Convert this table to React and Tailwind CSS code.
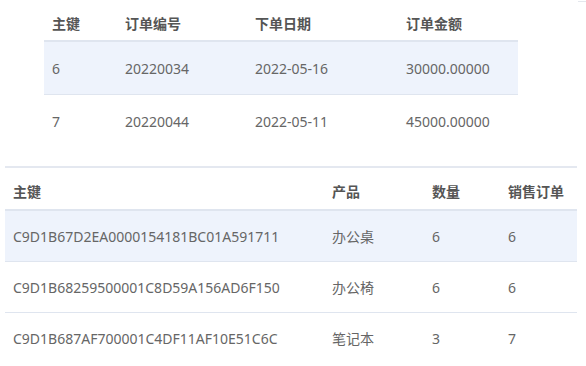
import React from "react";

const orders = [
  { id: "6", no: "20220034", date: "2022-05-16", amount: "30000.00000" },
  { id: "7", no: "20220044", date: "2022-05-11", amount: "45000.00000" },
];

const items = [
  { id: "C9D1B67D2EA0000154181BC01A591711", product: "办公桌", qty: "6", order: "6" },
  { id: "C9D1B68259500001C8D59A156AD6F150", product: "办公椅", qty: "6", order: "6" },
  { id: "C9D1B687AF700001C4DF11AF10E51C6C", product: "笔记本", qty: "3", order: "7" },
];

const font = { fontFamily: '"Noto Sans", "Noto Sans CJK SC", sans-serif' };

export default function App() {
  return (
    <div className="relative w-[586px] h-[366px] bg-white overflow-hidden text-[14px]" style={font}>
      <div className="absolute right-0 top-[1px] w-[8px] h-px bg-[#e4e7ed]"></div>

      {/* Orders */}
      <div className="ml-[44px] w-[474px]">
        <div className="flex h-[40px] pt-[6px] items-center font-bold text-[#555]">
          <div className="w-[73px] pl-[8px]">主键</div>
          <div className="w-[130px] pl-[8px]">订单编号</div>
          <div className="w-[151px] pl-[8px]">下单日期</div>
          <div className="w-[120px] pl-[8px]">订单金额</div>
        </div>
        <div className="border-t-2 border-[#dfe5ef]">
          {orders.map((o, i) => (
            <div
              key={o.id}
              className={
                "flex items-center h-[53px] text-[#666] " +
                (i === 0 ? "bg-[#eef3fc] border-b border-[#dfe5ef]" : "")
              }
            >
              <div className="w-[73px] pl-[8px]">{o.id}</div>
              <div className="w-[130px] pl-[8px]">{o.no}</div>
              <div className="w-[151px] pl-[8px]">{o.date}</div>
              <div className="w-[120px] pl-[8px]">{o.amount}</div>
            </div>
          ))}
        </div>
      </div>

      {/* Order items */}
      <div className="mt-[18px] ml-[5px] w-[572px] border-t-2 border-[#e4e8f0]">
        <div className="flex h-[41px] pt-[6px] items-center font-bold text-[#555]">
          <div className="w-[319px] pl-[8px]">主键</div>
          <div className="w-[100px] pl-[8px]">产品</div>
          <div className="w-[76px] pl-[8px]">数量</div>
          <div className="w-[77px] pl-[8px]">销售订单</div>
        </div>
        <div className="border-t-2 border-[#dfe5ef]">
          {items.map((r, i) => (
            <div
              key={r.id}
              className={
                "flex items-center h-[51px] text-[#666] " +
                (i === 0 ? "bg-[#eef3fc] " : "") +
                (i < items.length - 1 ? "border-b border-[#dfe5ef]" : "")
              }
            >
              <div className="w-[319px] pl-[8px]">{r.id}</div>
              <div className="w-[100px] pl-[8px]">{r.product}</div>
              <div className="w-[76px] pl-[8px]">{r.qty}</div>
              <div className="w-[77px] pl-[8px]">{r.order}</div>
            </div>
          ))}
        </div>
      </div>
    </div>
  );
}
